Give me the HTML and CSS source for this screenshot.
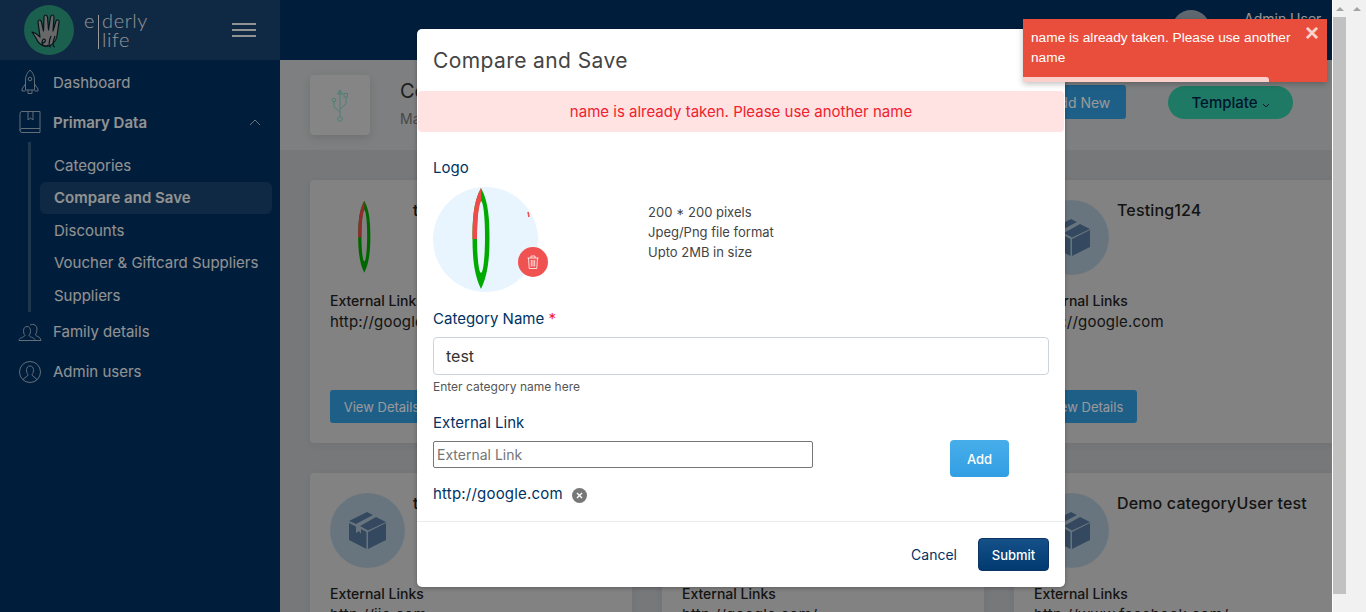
FILE: index.html
```html
<!DOCTYPE html>
<html lang="en">
<head>
  <meta charset="UTF-8">
  <meta name="viewport" content="width=device-width, initial-scale=1.0">
  <title>Compare and Save - Elderly Life</title>
  <link rel="stylesheet" href="styles.css">
</head>
<body>
  <div class="page">
    <aside class="sidebar">
      <div class="brand">
        <svg class="brand-mark" width="50" height="50" viewBox="0 0 50 50">
          <circle cx="25" cy="25" r="25" fill="#2d9f82"/>
          <path d="M8 27l3 1c2 1 4 3 5 4L14 17q0-2 1.500-2t2 2l2 9L20 12q0-2 1.500-2t2 2l1 13 2-13q.5-2 2-2t1.500 2l-1 14 3-10q.5-1.500 2-1t1 2l-2 14c-1 6-6 11-11 10-5 0-8-3-10-8z" fill="#adadad" stroke="#10242f" stroke-width="1.200" stroke-linejoin="round"/>
          <path d="M18 38c4 0 4-4 2-4s-3 6 0 7 4-1 4-1M27 31c-2 5-3 11 0 11M31 31c-2 5-3 11 0 11" fill="none" stroke="#10242f" stroke-width="1.200"/>
        </svg>
        <div class="brand-name">
          <span class="brand-e">e</span>
          <span class="brand-bar"></span>
          <span class="brand-top">derly</span>
          <span class="brand-low">life</span>
        </div>
        <div class="burger"><i></i><i></i><i></i></div>
      </div>
      <nav class="nav">
        <a class="nav-item">
          <svg class="nav-icon" viewBox="0 0 24 26"><path d="M12 1c-3 3-4.500 6-4.500 10v10h9V11c0-4-1.500-7-4.500-10zM7.500 15L4 20v2h3.500M16.500 15l3.500 5v2h-3.500M10 21v3.500h4V21"/><circle cx="12" cy="10" r="1.800"/></svg>
          Dashboard
        </a>
        <a class="nav-item nav-open">
          <svg class="nav-icon" viewBox="0 0 24 24"><path d="M4 1.500h18v21H4q-2 0-2-2V3.500q0-2 2-2zM2 20.500q0-2 2-2h18M10 1.500V10l2.500-2 2.500 2V1.500"/></svg>
          Primary Data
          <svg class="chevron" width="12" height="7" viewBox="0 0 12 7"><path d="M1 6l5-5 5 5"/></svg>
        </a>
        <div class="sub">
          <a class="sub-item">Categories</a>
          <a class="sub-item sub-active">Compare and Save</a>
          <a class="sub-item">Discounts</a>
          <a class="sub-item">Voucher &amp; Giftcard Suppliers</a>
          <a class="sub-item">Suppliers</a>
        </div>
        <a class="nav-item">
          <svg class="nav-icon" viewBox="0 0 24 20"><path d="M1 18.500c0-3 5-3 6-5-2-2-2.500-9 2-9s4 7 2 9c1 2 6 2 6 5zM12 3c4-2 7 1 7 4 0 2-1 5-1.500 6 1 1.500 5.500 2 5.500 5.500h-6"/></svg>
          Family details
        </a>
        <a class="nav-item">
          <svg class="nav-icon" viewBox="0 0 24 24"><circle cx="12" cy="12" r="10.500"/><path d="M5 20c1-3 5-3 5-5.500-2-2-2.500-8.500 2-8.500s4 6.500 2 8.500c0 2.500 4 2.500 5 5.500"/></svg>
          Admin users
        </a>
      </nav>
    </aside>

    <div class="main">
      <header class="topbar">
        <div class="avatar"></div>
        <div class="user-name">Admin User</div>
      </header>
      <section class="heading">
        <div class="heading-icon">
          <svg width="18" height="33" viewBox="0 0 18 33"><path d="M9 1v27M9 1L6.500 5h5zM9 23l-6-5v-5M9 20l6-5V8"/><circle cx="9" cy="30" r="2.300"/><circle cx="3" cy="11" r="1.800"/><rect x="13" y="4.500" width="3.500" height="3.500"/></svg>
        </div>
        <div class="heading-text">
          <div class="heading-title">Compare and Save</div>
          <div class="heading-sub">Manage</div>
        </div>
        <button class="btn-add">Add New</button>
        <button class="btn-template">Template <svg width="8" height="5" viewBox="0 0 8 5"><path d="M1 1l3 3 3-3"/></svg></button>
      </section>
      <section class="cards">
        <article class="card">
          <div class="card-top">
            <div class="card-logo">
              <svg width="75" height="75" viewBox="0 0 105 105"><use href="#ring"/></svg>
            </div>
            <div class="card-title">test</div>
          </div>
          <div class="card-label">External Links</div>
          <div class="card-link">http://google.com</div>
          <button class="btn-view">View Details</button>
        </article>
        <article class="card">
          <div class="card-top">
            <div class="card-logo card-logo-box"><svg class="box" viewBox="0 0 37 37"><use href="#box"/></svg></div>
            <div class="card-title">test</div>
          </div>
          <div class="card-label">External Links</div>
          <div class="card-link">http://google.com</div>
          <button class="btn-view">View Details</button>
        </article>
        <article class="card">
          <div class="card-top">
            <div class="card-logo card-logo-box"><svg class="box" viewBox="0 0 37 37"><use href="#box"/></svg></div>
            <div class="card-title">Testing124</div>
          </div>
          <div class="card-label">External Links</div>
          <div class="card-link">http://google.com</div>
          <button class="btn-view">View Details</button>
        </article>
        <article class="card">
          <div class="card-top">
            <div class="card-logo card-logo-box"><svg class="box" viewBox="0 0 37 37"><use href="#box"/></svg></div>
            <div class="card-title">test</div>
          </div>
          <div class="card-label">External Links</div>
          <div class="card-link">http://jio.com</div>
        </article>
        <article class="card">
          <div class="card-top">
            <div class="card-logo card-logo-box"><svg class="box" viewBox="0 0 37 37"><use href="#box"/></svg></div>
            <div class="card-title">test</div>
          </div>
          <div class="card-label">External Links</div>
          <div class="card-link">http://google.com/</div>
        </article>
        <article class="card">
          <div class="card-top">
            <div class="card-logo card-logo-box"><svg class="box" viewBox="0 0 37 37"><use href="#box"/></svg></div>
            <div class="card-title">Demo categoryUser test</div>
          </div>
          <div class="card-label">External Links</div>
          <div class="card-link">http://www.facebook.com/</div>
        </article>
      </section>
    </div>

    <div class="overlay"></div>

    <div class="modal">
      <h2 class="modal-title">Compare and Save</h2>
      <div class="modal-alert">name is already taken. Please use another name</div>
      <div class="modal-body">
        <div class="field-label">Logo</div>
        <div class="logo-row">
          <div class="logo-circle">
            <svg width="105" height="105" viewBox="0 0 105 105"><use href="#ring"/><path d="M95 25l1 5" stroke="#f04a4a" stroke-width="1.500"/></svg>
            <button class="logo-delete">
              <svg width="12" height="14" viewBox="0 0 12 14"><path d="M.5 3h11M4 3V1h4v2M1.500 3l.7 10.500h7.600L10.500 3M4.300 5v6.500M6 5v6.500M7.700 5v6.500"/></svg>
            </button>
          </div>
          <ul class="logo-hints">
            <li>200 * 200 pixels</li>
            <li>Jpeg/Png file format</li>
            <li>Upto 2MB in size</li>
          </ul>
        </div>
        <div class="field-label name-label">Category Name <span class="req">*</span></div>
        <input class="name-input" type="text" value="test">
        <div class="help">Enter category name here</div>
        <div class="field-label link-label">External Link</div>
        <div class="link-row">
          <input class="link-input" type="text" placeholder="External Link">
          <button class="btn-link-add">Add</button>
        </div>
        <div class="link-chip">
          http://google.com
          <span class="chip-x">
            <svg width="7" height="7" viewBox="0 0 7 7"><path d="M1 1l5 5M6 1L1 6"/></svg>
          </span>
        </div>
      </div>
      <div class="modal-foot">
        <button class="btn-cancel">Cancel</button>
        <button class="btn-submit">Submit</button>
      </div>
    </div>

    <div class="toast">
      <span class="toast-close">&times;</span>
      <div class="toast-msg">name is already taken. Please use another name</div>
      <div class="toast-bar"></div>
    </div>
  </div>

  <div class="scroll scroll-inner"><i class="arrow"></i><b></b></div>
  <div class="scroll scroll-outer"><i class="arrow"></i></div>

  <svg width="0" height="0" class="defs">
    <symbol id="box" viewBox="0 0 37 37">
      <path d="M0 9L18 0l6 3L7 12zM27 5l10 5-18 8.500L11 14zM0 11l7 3.500V21l3-2 2 3v-5l5.500 3v17L0 28zM19 20l18-9v17l-18 9z"/>
    </symbol>
    <symbol id="ring" viewBox="0 0 105 105">
      <path fill-rule="evenodd" fill="#00aa00" d="M48 1C56 15 56.500 35 56.500 52 56.500 70 55 88 48 102 41 88 39.500 70 39.500 52 39.500 35 40 15 48 1zM48 14A4 36 0 0 0 48 86 4 36 0 0 0 48 14z"/>
      <path fill="#f04a4a" d="M48 1C40 15 39.500 35 39.500 52H44C44 30 46 18 48 14z"/>
    </symbol>
  </svg>
</body>
</html>
```

FILE: styles.css
```css
* {
  box-sizing: border-box;
}

html, body {
  height: 612px;
  overflow: hidden;
}

body {
  margin: 0;
  display: flex;
  font-family: Inter, "Open Sans", sans-serif;
  background: #f1f1f1;
}

.defs {
  display: none;
}

.page {
  position: relative;
  width: 1333px;
  height: 612px;
  display: flex;
  overflow: hidden;
  background: #c6c8cc;
  border-right: 1px solid #fff;
}

/* sidebar */
.sidebar {
  width: 280px;
  flex: none;
  background: #003264;
  color: #f4f4f4;
}

.brand {
  height: 60px;
  background: #194470;
  display: flex;
  align-items: center;
  padding-left: 24px;
  padding-right: 24px;
}

.brand-name {
  margin-left: 10px;
  display: grid;
  grid-template-columns: auto 1px auto;
  column-gap: 3px;
  font-family: Lato, sans-serif;
  font-weight: 300;
  font-size: 20px;
  line-height: 19px;
  letter-spacing: .6px;
}

.brand-e {
  grid-column: 1;
  grid-row: 1;
}

.brand-bar {
  grid-column: 2;
  grid-row: 1 / span 2;
  background: #fff;
  margin-top: 4px;
}

.brand-top {
  grid-column: 3;
  grid-row: 1;
}

.brand-low {
  grid-column: 3;
  grid-row: 2;
}

.burger {
  margin-left: auto;
}

.burger i {
  display: block;
  width: 24px;
  height: 2px;
  background: #f4f4f4;
  margin: 4px 0;
}

.nav {
  padding-top: 2px;
  font-size: 15px;
}

.nav-item {
  height: 40px;
  display: flex;
  align-items: center;
  padding-left: 18px;
}

.nav-icon {
  width: 24px;
  height: 26px;
  margin-right: 11px;
  fill: none;
  stroke: #fff;
  stroke-width: 1;
  opacity: .65;
}

.nav-open {
  font-weight: 600;
}

.chevron {
  margin-left: auto;
  margin-right: 19px;
  fill: none;
  stroke: #fff;
  opacity: .7;
}

.sub {
  margin-left: 28px;
  border-left: 3px solid #335b83;
  padding-top: 7px;
  padding-left: 9px;
  padding-right: 8px;
}

.sub-item {
  display: flex;
  align-items: center;
  height: 32.5px;
  padding-left: 14px;
  border-radius: 6px;
}

.sub-active {
  background: #194470;
  font-weight: 600;
}

/* content behind the modal */
.main {
  flex: 1;
  min-width: 0;
}

.topbar {
  height: 60px;
  background: #003264;
  display: flex;
  padding-left: 892px;
  padding-top: 10px;
  color: #fff;
}

.avatar {
  width: 38px;
  height: 38px;
  border-radius: 50%;
  background: #a0adb9;
}

.user-name {
  margin-left: 34px;
  font-size: 14px;
}

.heading {
  height: 90px;
  background: #d2d4d5;
  display: flex;
  align-items: flex-start;
  padding: 15px 39px 0 30px;
}

.heading-icon {
  width: 60px;
  height: 60px;
  background: #dedede;
  border-radius: 4px;
  box-shadow: 0 3px 8px rgba(0, 0, 0, .12);
  display: flex;
  align-items: center;
  justify-content: center;
}

.heading-icon svg {
  fill: none;
  stroke: #7fd6c2;
}

.heading-text {
  margin-left: 30px;
  flex: 1;
}

.heading-title {
  font-size: 20px;
  color: #333;
  margin-top: 4px;
}

.heading-sub {
  font-size: 14px;
  color: #777;
  margin-top: 7px;
}

.btn-add {
  margin-top: 10px;
  width: 92px;
  height: 34px;
  border: 0;
  border-radius: 3px;
  background: #329ee3;
  color: #fff;
  font: inherit;
  font-size: 14px;
}

.btn-template {
  margin-top: 11px;
  margin-left: 42px;
  width: 125px;
  height: 33px;
  border: 0;
  border-radius: 17px;
  background: #34cba8;
  color: #00264d;
  font: inherit;
  font-size: 15px;
  font-weight: 500;
}

.btn-template svg {
  fill: none;
  stroke: #00264d;
}

.cards {
  display: grid;
  grid-template-columns: repeat(3, 322px);
  grid-auto-rows: 263px;
  gap: 30px;
  padding: 30px 0 0 30px;
}

.card {
  background: #d9d9d9;
  border-radius: 4px;
  padding: 20px;
  box-shadow: 0 2px 8px rgba(0, 0, 0, .06);
  color: #222;
}

.card-top {
  display: flex;
  height: 91px;
}

.card-logo {
  width: 75px;
  height: 75px;
  flex: none;
  border-radius: 50%;
  display: flex;
  align-items: center;
  justify-content: center;
}

.card-logo-box {
  background: #b0c4d3;
}

.box {
  width: 37px;
  height: 37px;
  fill: #577a9e;
}

.card-title {
  margin-left: 8px;
  font-size: 16px;
  font-weight: 500;
  letter-spacing: .15px;
  line-height: 20px;
}

.card-label {
  font-size: 14px;
  font-weight: 500;
  line-height: 20px;
}

.card-link {
  font-size: 15px;
  letter-spacing: .2px;
  line-height: 22px;
}

.btn-view {
  display: block;
  margin-top: 57px;
  width: 103px;
  height: 33px;
  border: 0;
  border-radius: 3px;
  background: #329ee3;
  color: #fff;
  font: inherit;
  font-size: 13px;
}

.overlay {
  position: absolute;
  inset: 0;
  background: rgba(0, 0, 0, .4);
}

/* modal */
.modal {
  position: absolute;
  left: 417px;
  top: 29px;
  width: 648px;
  height: 558px;
  background: #fff;
  border-radius: 5px;
  box-shadow: 0 1px 4px rgba(0, 0, 0, .3);
  color: #003264;
  display: flex;
  flex-direction: column;
}

.modal-title {
  margin: 0;
  height: 62px;
  padding-left: 16px;
  font-size: 21px;
  font-weight: 400;
  letter-spacing: .4px;
  line-height: 63px;
  color: #444;
}

.modal-alert {
  height: 41px;
  margin: 0 1px;
  background: #ffe3e3;
  border-radius: 4px;
  color: #f0212e;
  font-size: 15px;
  line-height: 41px;
  text-align: center;
}

.modal-body {
  flex: 1;
  padding: 26px 16px 0;
}

.field-label {
  font-size: 15px;
  line-height: 20px;
}

.logo-row {
  display: flex;
  align-items: flex-start;
  margin-top: 9px;
}

.logo-circle {
  position: relative;
  width: 105px;
  height: 105px;
  border-radius: 50%;
  background: #e8f4fe;
}

.logo-delete {
  position: absolute;
  left: 85px;
  top: 60px;
  width: 30px;
  height: 30px;
  padding: 0;
  border: 0;
  border-radius: 50%;
  background: #f05252;
  display: flex;
  align-items: center;
  justify-content: center;
}

.logo-delete svg {
  fill: none;
  stroke: #fff;
  stroke-width: .8;
}

.logo-hints {
  list-style: none;
  margin: 15px 0 0 110px;
  padding: 0;
  font-size: 13px;
  line-height: 20px;
  color: #444;
}

.name-label {
  margin-top: 17px;
}

.req {
  color: #f0212e;
}

.name-input {
  display: block;
  width: 100%;
  height: 38px;
  margin-top: 8px;
  padding: 0 12px;
  border: 1px solid #ced4da;
  border-radius: 4px;
  font: inherit;
  font-size: 16px;
  color: #333;
}

.help {
  font-size: 12px;
  color: #555;
  line-height: 16px;
  margin-top: 4px;
}

.link-label {
  margin-top: 18px;
}

.link-row {
  display: flex;
  align-items: flex-start;
  margin-top: 7px;
}

.link-input {
  width: 380px;
  height: 27px;
  margin-top: 1px;
  padding: 0 3px;
  border: 1px solid #767676;
  border-radius: 2px;
  font: inherit;
  font-size: 14px;
}

.link-input::placeholder {
  color: #757575;
}

.btn-link-add {
  margin-left: 137px;
  width: 59px;
  height: 37px;
  border: 0;
  border-radius: 4px;
  background: linear-gradient(#47aeea, #329ee3);
  color: #fff;
  font: inherit;
  font-size: 13px;
  font-weight: 500;
}

.link-chip {
  display: flex;
  align-items: center;
  margin-top: 5px;
  font-size: 15px;
  letter-spacing: .2px;
  line-height: 24px;
}

.chip-x {
  width: 15px;
  height: 15px;
  margin-left: 9px;
  margin-top: 2px;
  border-radius: 50%;
  background: #777;
  display: flex;
  align-items: center;
  justify-content: center;
}

.chip-x svg {
  stroke: #fff;
  stroke-width: 1.4;
}

.modal-foot {
  height: 66px;
  border-top: 1px solid #e9ecef;
  display: flex;
  align-items: center;
  justify-content: flex-end;
  padding-right: 16px;
}

.btn-cancel {
  border: 0;
  background: none;
  color: #003264;
  font: inherit;
  font-size: 14px;
  margin-right: 21px;
  padding: 0;
}

.btn-submit {
  width: 71px;
  height: 33px;
  border: 1px solid #0a3564;
  border-radius: 4px;
  background: linear-gradient(#155089, #003a70);
  color: #fff;
  font: inherit;
  font-size: 13px;
  font-weight: 500;
}

/* toast */
.toast {
  position: absolute;
  left: 1023px;
  top: 19px;
  width: 304px;
  height: 63px;
  background: #e94e3d;
  box-shadow: 0 2px 6px rgba(0, 0, 0, .25);
  color: #fff;
  font-family: "Liberation Sans", Arial, sans-serif;
}

.toast-msg {
  padding: 9px 28px 0 8px;
  line-height: 20px;
  font-size: 13.7px;
}

.toast-close {
  position: absolute;
  right: 8px;
  top: 2px;
  font-size: 24px;
  line-height: 24px;
  font-weight: 700;
  opacity: .75;
}

.toast-bar {
  position: absolute;
  left: 0;
  bottom: 0;
  width: 246px;
  height: 5px;
  background: #fbd0ca;
  border-radius: 0 3px 0 0;
}

/* the two browser scrollbars */
.scroll {
  height: 612px;
  flex: none;
  background: #f1f1f1;
  position: relative;
}

.scroll-inner {
  width: 14px;
}

.scroll-inner b {
  position: absolute;
  left: 0;
  top: 17px;
  width: 13px;
  height: 577px;
  background: #c1c1c1;
}

.scroll-outer {
  width: 19px;
}

.arrow {
  position: absolute;
  left: 50%;
  top: 7px;
  margin-left: -4px;
  border-left: 4px solid transparent;
  border-right: 4px solid transparent;
  border-bottom: 4px solid #a3a3a3;
}
```
